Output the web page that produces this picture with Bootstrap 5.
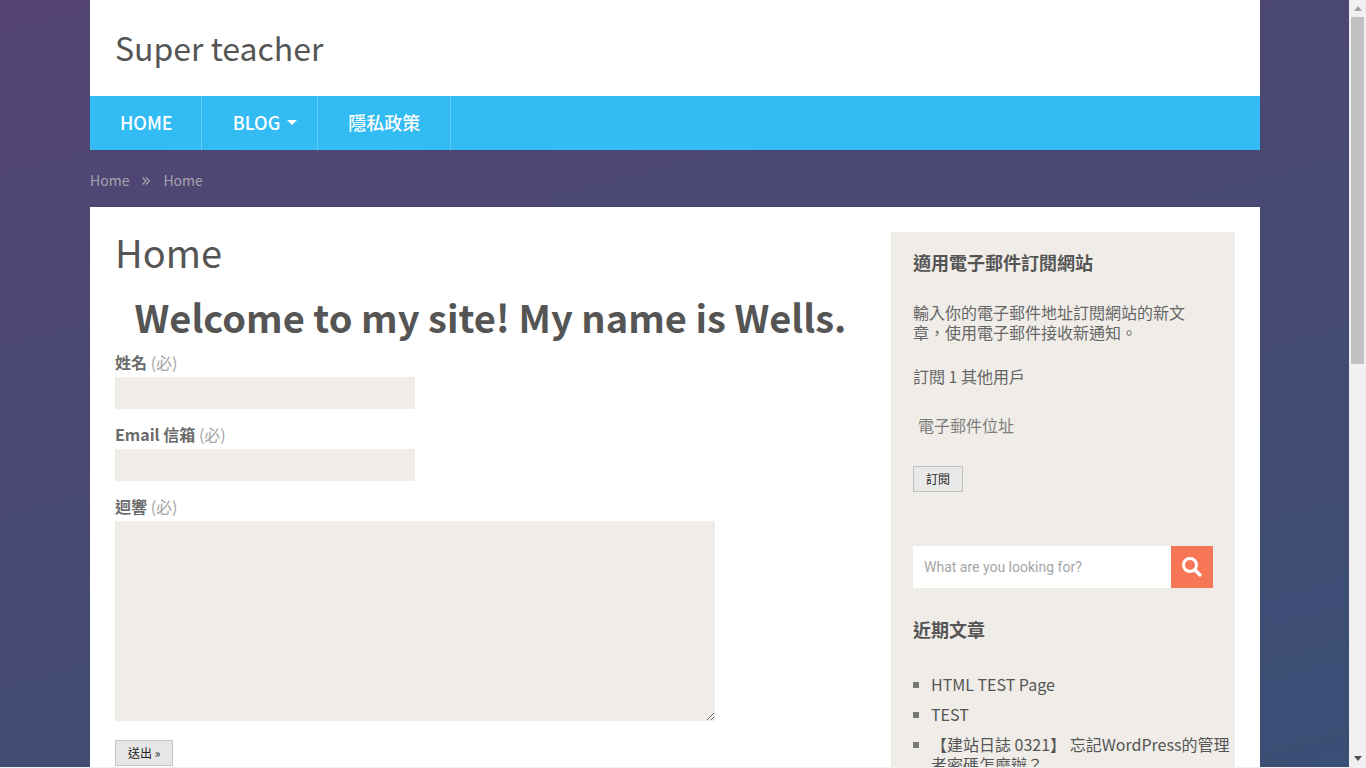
<!DOCTYPE html>
<html lang="zh-Hant">
<head>
  <meta charset="UTF-8" />
  <meta name="viewport" content="width=device-width, initial-scale=1.0" />
  <title>Super teacher</title>
  <link href="https://cdn.jsdelivr.net/npm/bootstrap@5.3.0/dist/css/bootstrap.min.css" rel="stylesheet">
  <style>
    html, body { height: 768px; overflow: hidden; }
    body {
      font-family: "Noto Sans CJK TC", "Noto Sans", sans-serif;
      color: #555;
      background: #f1f1f1;
    }
    .screen { height: 767px; overflow: hidden; }
    .page-bg {
      width: 1349px;
      overflow: hidden;
      background: linear-gradient(165deg, #544473 0%, #3a4f75 100%);
    }
    .wrap { width: 1170px; margin-left: 90px; }
    .site-head { height: 96px; padding: 24px 25px 0; }
    .site-title { font-size: 32px; line-height: 46px; color: #555; font-weight: 400; margin: 0; }
    .main-nav { height: 54px; background: #33bbf3; }
    .main-nav .nav-link {
      height: 54px;
      display: flex;
      align-items: center;
      gap: 7px;
      padding: 0 29px 2px 30px;
      color: #fff;
      font-size: 18px;
      font-weight: 500;
      border-right: 1px solid #66cdf6;
    }
    .main-nav .nav-item:first-child .nav-link { padding-right: 28px; }
    .main-nav .nav-item:nth-child(2) .nav-link { padding-left: 31px; }
    .main-nav .nav-item:last-child .nav-link { padding-right: 30px; }
    .caret-down {
      width: 0; height: 0;
      margin-right: -9px;
      border-left: 5.5px solid transparent;
      border-right: 5.5px solid transparent;
      border-top: 5.5px solid #fff;
    }
    .crumbs { height: 57px; padding-top: 3px; display: flex; align-items: center; gap: 13px; font-size: 14px; color: #a5a3ae; }
    .crumbs svg { display: block; margin-top: 2px; }
    .content-box { padding: 25px; gap: 25px; height: 600px; }
    .left-col { width: 751px; }
    .page-title { font-size: 38px; line-height: 44px; font-weight: 400; color: #555; margin: -2px 0 0; }
    .welcome { font-size: 38px; line-height: 52px; font-weight: 700; color: #555; text-align: center; margin: 17px 0 7px; }
    .f-label { display: block; font-size: 16px; line-height: 24px; font-weight: 700; color: #6b6b6b; margin: 0 0 3px; }
    .f-label span { font-weight: 400; color: #a5a5a5; }
    .f-input {
      display: block;
      width: 300px;
      height: 32px;
      background: #f0ede8;
      border: 0;
      border-radius: 0;
      margin-bottom: 13px;
    }
    .f-area { display: block; width: 600px; height: 200px; background: #f0ede8; border: 0; border-radius: 0; padding: 0; }
    .send-btn {
      font-size: 12px;
      line-height: 18px;
      color: #222;
      background: #e6e6e6;
      border: 1px solid #c6c6c6;
      border-radius: 0;
      padding: 3px 12px;
      margin-top: 19px;
    }
    .side-col { width: 344px; background: #f0ede8; padding: 20px 22px; flex: none; }
    .side-head { font-size: 18px; line-height: 20px; font-weight: 700; color: #555; margin: 0; }
    .side-text { font-size: 16px; line-height: 21px; color: #666; margin: 0; }
    .sub-btn {
      font-size: 12px;
      line-height: 18px;
      color: #222;
      background: #e9e9e9;
      border: 1px solid #c0c0c0;
      border-radius: 0;
      padding: 3px 12px;
    }
    .sub-text-intro { margin-top: 30px; line-height: 20px; }
    .sub-text-count { margin-top: 24px; }
    .sub-text-mail { margin-top: 28px; padding-left: 5px; color: #7d7d7d; }
    .sub-btn-gap { margin-top: 30px; }
    .search-box { width: 300px; height: 42px; margin-top: 54px; }
    .search-input {
      flex: 1;
      background: #fff;
      color: #a5a5a5;
      font-family: Roboto, sans-serif;
      font-size: 14px;
      line-height: 42px;
      padding-left: 11px;
    }
    .search-btn { width: 42px; background: #f77655; }
    .recent-head { margin-top: 31px; }
    .post-list { list-style: none; padding: 0; margin: 35px 0 0; font-size: 16px; line-height: 20px; color: #555; }
    .post-list li { position: relative; padding-left: 18px; margin-bottom: 10px; width: 320px; }
    .post-list li::before {
      content: "";
      position: absolute;
      left: 0; top: 8px;
      width: 6px; height: 6px;
      background: #777;
    }
    .fake-scroll { width: 17px; background: #f1f1f1; flex: none; height: 767px; }
    .scroll-btn { height: 17px; }
    .scroll-thumb { width: 13px; height: 347px; margin-left: 2px; background: #c1c1c1; }
    .scroll-space { flex: 1; }
  </style>
</head>
<body>
  <div class="screen d-flex">
    <div class="page-bg">
      <div class="wrap">
        <header class="site-head bg-white">
          <h1 class="site-title">Super teacher</h1>
        </header>
        <nav class="main-nav">
          <ul class="nav">
            <li class="nav-item"><a class="nav-link" href="#">HOME</a></li>
            <li class="nav-item"><a class="nav-link" href="#">BLOG <span class="caret-down"></span></a></li>
            <li class="nav-item"><a class="nav-link" href="#">隱私政策</a></li>
          </ul>
        </nav>
        <div class="crumbs">
          <span>Home</span>
          <svg width="8" height="8" viewBox="0 0 8 8" fill="none" stroke="#a5a3ae" stroke-width="1.2"><path d="M0.5 0.5 4 4 0.5 7.5M4 0.5 7.5 4 4 7.5"/></svg>
          <span>Home</span>
        </div>
        <main class="content-box bg-white d-flex">
          <div class="left-col">
            <h2 class="page-title">Home</h2>
            <p class="welcome">Welcome to my site! My name is Wells.</p>
            <form>
              <label class="f-label">姓名 <span>(必)</span></label>
              <input class="f-input" type="text">
              <label class="f-label">Email 信箱 <span>(必)</span></label>
              <input class="f-input" type="text">
              <label class="f-label">迴響 <span>(必)</span></label>
              <textarea class="f-area"></textarea>
              <button class="send-btn" type="button">送出 »</button>
            </form>
          </div>
          <aside class="side-col">
            <h3 class="side-head">適用電子郵件訂閱網站</h3>
            <p class="side-text sub-text-intro">輸入你的電子郵件地址訂閱網站的新文章，使用電子郵件接收新通知。</p>
            <p class="side-text sub-text-count">訂閱 1 其他用戶</p>
            <p class="side-text sub-text-mail">電子郵件位址</p>
            <button class="sub-btn sub-btn-gap" type="button">訂閱</button>
            <div class="search-box d-flex">
              <div class="search-input">What are you looking for?</div>
              <div class="search-btn d-flex align-items-center justify-content-center">
                <svg width="20" height="20" viewBox="0 0 20 20" fill="none" stroke="#fff"><circle cx="8" cy="8" r="6.5" stroke-width="3"/><path d="M13 13 18 18" stroke-width="3.4" stroke-linecap="round"/></svg>
              </div>
            </div>
            <h3 class="side-head recent-head">近期文章</h3>
            <ul class="post-list">
              <li>HTML TEST Page</li>
              <li>TEST</li>
              <li>【建站日誌 0321】 忘記WordPress的管理者密碼怎麼辦？</li>
            </ul>
          </aside>
        </main>
      </div>
    </div>
    <div class="fake-scroll d-flex flex-column">
      <div class="scroll-btn d-flex align-items-center justify-content-center">
        <svg width="8" height="5" viewBox="0 0 8 5"><path d="M4 0 8 5H0z" fill="#a3a3a3"/></svg>
      </div>
      <div class="scroll-thumb"></div>
      <div class="scroll-space"></div>
      <div class="scroll-btn d-flex align-items-center justify-content-center">
        <svg width="8" height="5" viewBox="0 0 8 5"><path d="M0 0H8L4 5z" fill="#505050"/></svg>
      </div>
    </div>
  </div>
  <script src="https://cdn.jsdelivr.net/npm/bootstrap@5.3.0/dist/js/bootstrap.bundle.min.js"></script>
</body>
</html>
